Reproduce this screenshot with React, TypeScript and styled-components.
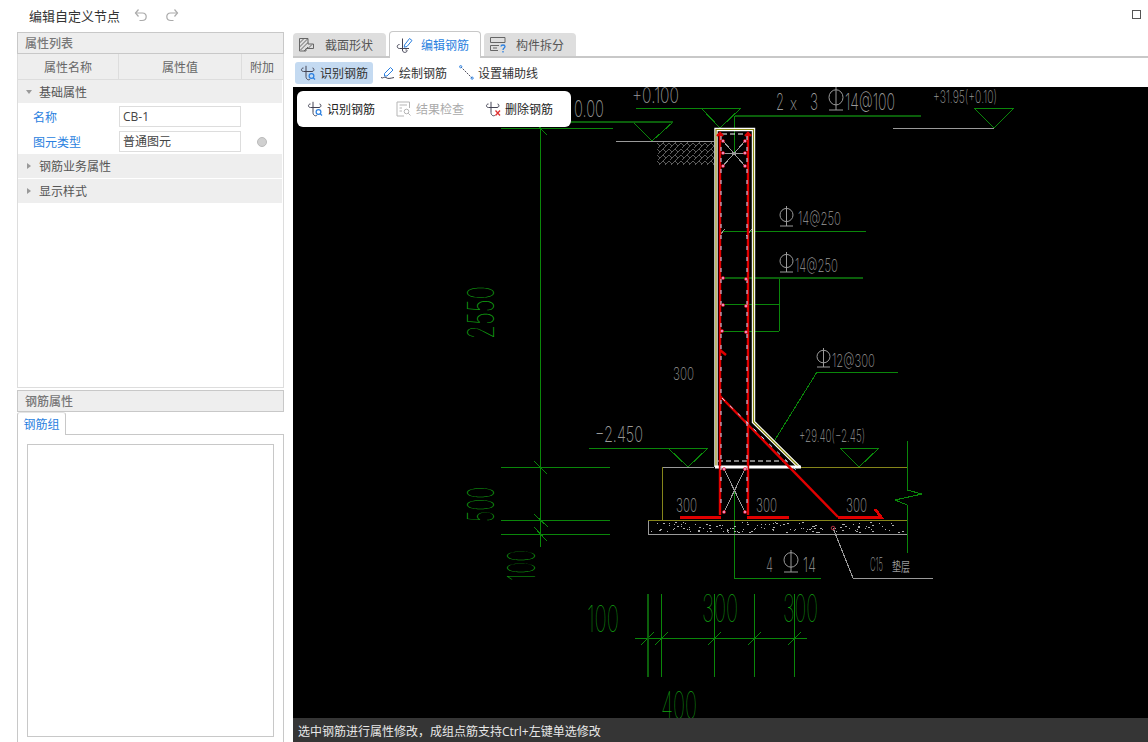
import React from 'react';
import styled, { createGlobalStyle } from 'styled-components';

const blue = '#2a7fe0';
const green = '#0a860a';
const darkGreen = '#0b5f0b';
const gray = '#9a9a9a';
const olive = '#85851a';
const red = '#e00000';

const GlobalStyle = createGlobalStyle`
  html, body { margin: 0; padding: 0; height: 100%; background: #fff; overflow: hidden; }
  body { font-family: "Open Sans", "Noto Sans CJK SC", sans-serif; font-size: 12px; color: #333; }
  #root { height: 100%; }
`;

const Page = styled.div`
  display: flex;
  flex-direction: column;
  height: 742px;
  width: 1148px;
`;

const TopBar = styled.header`
  display: flex;
  align-items: center;
  height: 31px;
  padding: 0 7px 0 29px;
  flex: none;
`;

const WindowTitle = styled.span`
  font-size: 13px;
  color: #333;
  margin-right: 14px;
`;

const HistoryButton = styled.span`
  display: flex;
  margin-right: 17px;
  margin-bottom: 2px;
`;

const MaxButton = styled.span`
  width: 7px;
  height: 7px;
  border: 1px solid #555;
  margin-left: auto;
  margin-bottom: 2px;
`;

const Body = styled.div`
  display: flex;
  flex: 1;
  min-height: 0;
`;

const Sidebar = styled.aside`
  display: flex;
  flex-direction: column;
  width: 267px;
  margin: 1px 9px 0 17px;
  flex: none;
`;

const PropertyPanel = styled.section`
  display: flex;
  flex-direction: column;
  height: 356px;
  border-left: 1px solid #ddd;
  border-right: 1px solid #ddd;
  border-bottom: 1px solid #ddd;
  box-sizing: border-box;
  flex: none;
`;

const PanelHeader = styled.h3<{ $flush?: boolean }>`
  margin: ${(p) => (p.$flush ? '0' : '0 -1px')};
  height: 22px;
  line-height: 21px;
  box-sizing: border-box;
  padding-left: 7px;
  background: #eeeeee;
  border: 1px solid #c8c8c8;
  font-size: 12px;
  font-weight: 500;
  color: #777;
  flex: none;
`;

const ColumnRow = styled.div`
  display: grid;
  grid-template-columns: 100px 123px 41px;
  height: 26px;
  background: #eeeeee;
  border-bottom: 1px solid #ddd;
  box-sizing: border-box;
`;

const ColumnCell = styled.div<{ $sep?: boolean }>`
  display: flex;
  align-items: center;
  justify-content: center;
  padding-top: 1px;
  color: #666;
  border-left: ${(p) => (p.$sep ? '1px solid #ddd' : 'none')};
`;

const GroupRow = styled.div<{ $open?: boolean }>`
  display: flex;
  align-items: center;
  height: ${(p) => (p.$open ? '23px' : '24px')};
  margin-bottom: 1px;
  padding-left: 8px;
  margin-right: 1px;
  background: #eeeeee;
  color: #555;
  box-sizing: border-box;
`;

const Caret = styled.span<{ $open?: boolean }>`
  width: 0;
  height: 0;
  border-style: solid;
  ${(p) =>
    p.$open
      ? 'border-width: 4px 3px 0 3px; border-color: #999 transparent transparent transparent; margin-right: 7px;'
      : 'border-width: 3px 0 3px 4px; border-color: transparent transparent transparent #999; margin-left: 1px; margin-right: 8px;'}
`;

const PropRow = styled.div`
  display: grid;
  grid-template-columns: 100px 123px 41px;
  align-items: center;
  height: 25px;
`;

const PropName = styled.span`
  color: ${blue};
  padding-left: 15px;
`;

const PropValue = styled.div`
  height: 21px;
  line-height: 19px;
  margin-left: 1px;
  padding-left: 3px;
  box-sizing: border-box;
  border: 1px solid #ddd;
  color: #444;
  background: #fff;
`;

const Radio = styled.span`
  justify-self: center;
  margin-left: 1px;
  width: 8px;
  height: 8px;
  border-radius: 50%;
  background: #d0d0d0;
  border: 1px solid #bbb;
`;

const RebarPanel = styled.section`
  display: flex;
  flex-direction: column;
  flex: 1;
  margin-top: 2px;
  min-height: 0;
`;

const RebarTabBar = styled.div`
  height: 23px;
  flex: none;
`;

const RebarTab = styled.span`
  display: block;
  width: 49px;
  height: 23px;
  line-height: 23px;
  box-sizing: border-box;
  text-align: center;
  color: ${blue};
  background: #fff;
  border: 1px solid #c8c8c8;
  border-top-color: #e4e4e4;
  border-bottom: none;
  border-radius: 3px 3px 0 0;
  position: relative;
  z-index: 1;
`;

const RebarBody = styled.div`
  flex: 1;
  margin-top: -1px;
  padding: 9px 9px 5px;
  border: 1px solid #c8c8c8;
  border-bottom: none;
  box-sizing: border-box;
  display: flex;
`;

const RebarList = styled.div`
  flex: 1;
  border: 1px solid #c8c8c8;
`;

const Workspace = styled.main`
  display: flex;
  flex-direction: column;
  flex: 1;
  min-width: 0;
`;

const TabBar = styled.nav`
  display: flex;
  align-items: flex-end;
  height: 27px;
  border-bottom: 2px solid #c8c8c8;
  flex: none;
  gap: 3px;
  box-sizing: border-box;
`;

const Tab = styled.div<{ $active?: boolean; $width: number; $gap: number }>`
  display: flex;
  align-items: center;
  gap: ${(p) => p.$gap}px;
  width: ${(p) => p.$width}px;
  height: ${(p) => (p.$active ? '27px' : '23px')};
  margin-bottom: ${(p) => (p.$active ? '-2px' : '0')};
  padding-left: 6px;
  box-sizing: border-box;
  border-radius: 4px 4px 0 0;
  background: ${(p) => (p.$active ? '#fff' : '#dedede')};
  border: ${(p) => (p.$active ? '1px solid #c8c8c8' : 'none')};
  border-bottom: none;
  color: ${(p) => (p.$active ? blue : '#555')};
  position: relative;
`;

const ToolBar = styled.div`
  display: flex;
  align-items: center;
  height: 29px;
  padding-left: 2px;
  gap: 2px;
  flex: none;
  box-sizing: border-box;
`;

const ToolButton = styled.div<{ $active?: boolean }>`
  display: flex;
  align-items: center;
  gap: 4px;
  height: 22px;
  padding: 0 5px;
  border-radius: 3px;
  background: ${(p) => (p.$active ? '#c4daf1' : 'transparent')};
  color: #333;
`;

const Canvas = styled.div`
  position: relative;
  flex: 1;
  min-height: 0;
  background: #000;
  overflow: hidden;
`;

const Drawing = styled.svg`
  display: block;
  width: 100%;
  height: 100%;
`;

const FloatBar = styled.div`
  position: absolute;
  left: 4px;
  top: 4px;
  width: 274px;
  height: 36px;
  display: flex;
  align-items: center;
  padding-left: 10px;
  gap: 21px;
  box-sizing: border-box;
  background: #fff;
  border-radius: 6px;
`;

const FloatButton = styled.div<{ $disabled?: boolean }>`
  display: flex;
  align-items: center;
  gap: 4px;
  color: ${(p) => (p.$disabled ? '#aaa' : '#222')};
`;

const StatusBar = styled.footer`
  height: 24px;
  line-height: 28px;
  padding-left: 5px;
  background: #353535;
  color: #e8e8e8;
  flex: none;
  overflow: hidden;
  white-space: nowrap;
`;

/* icons */
const HistoryIcon = ({ redo }: { redo?: boolean }) => (
  <svg width="14" height="14" viewBox="0 0 14 14" fill="none" stroke="#aaa" strokeWidth="1.2" style={redo ? { transform: 'scaleX(-1)' } : undefined}>
    <path d="M1.5 5H8.5C13.5 5 13.5 12.5 8 12.5H5.5" />
    <path d="M4.5 1.5L1.5 5L4.5 8.5" />
  </svg>
);

const RebarIcon = ({ badge }: { badge?: 'find' | 'delete' }) => (
  <svg width="16" height="16" viewBox="0 0 16 16" fill="none" strokeWidth="1" stroke="#445">
    <path d="M3.5 3C.8 3 .8 6.5 3.5 6.5H12C14.5 6.5 14.5 3 12.5 3" />
    <path d="M6 .8V11.5C6 15 9.5 15.5 10 14" />
    {badge === 'find' && (
      <g stroke={blue} strokeWidth="1.2">
        <circle cx="11.5" cy="11" r="2.4" />
        <path d="M13.3 12.8L15 14.5" />
      </g>
    )}
    {badge === 'delete' && (
      <g stroke="#e03030" strokeWidth="1.3">
        <path d="M10.5 9.5L15 14.5M15 9.5L10.5 14.5" />
      </g>
    )}
  </svg>
);

const SectionIcon = () => (
  <svg width="15" height="15" viewBox="0 0 15 15" fill="none" stroke="#666" strokeWidth="1">
    <path d="M.5 1.5H9V7H14.5V11.5H7V14H.5Z" />
    <path d="M.5 6L5 1.5M.5 10L8.5 2M1.5 13L9 5.5M5 14L9 10" />
    <path d="M9 11.5L13 7.5" />
  </svg>
);

const EditRebarIcon = () => (
  <svg width="17" height="17" viewBox="0 0 17 17" fill="none" stroke="#445" strokeWidth="1">
    <path d="M3.5 7.5C.5 7.5 .5 11.5 3.5 11.5H13" />
    <path d="M6.5 1.5V13C6.5 16 10.5 16 11 14C11.3 12.8 10 12.5 9.5 13" />
    <path d="M8.5 8L13.5 1.5L16 3.5L11 9.5L8.2 10.2Z" stroke={blue} />
  </svg>
);

const SplitIcon = () => (
  <svg width="17" height="17" viewBox="0 0 17 17" fill="none" stroke="#666" strokeWidth="1">
    <path d="M.5 6.5V1.5H15V6.5ZM.5 9.5H9M.5 9.5V14.5H8M3 12H7" />
    <path d="M11 10.5C11 8.5 15 8.5 15 10.5C15 12 13 12 13 14" stroke={blue} strokeWidth="1.3" />
    <path d="M13 15V16.5" stroke={blue} strokeWidth="1.3" />
  </svg>
);

const PencilIcon = () => (
  <svg width="15" height="15" viewBox="0 0 15 15" fill="none" strokeWidth="1">
    <path d="M1 12.5C3 14 4.5 11 6 12.5S10 13.5 14 12.5" stroke="#445" />
    <path d="M4.5 8.5L10.5 2.5L13 5L7 11H4.5Z" stroke={blue} />
  </svg>
);

const AuxLineIcon = () => (
  <svg width="15" height="15" viewBox="0 0 16 16" fill="none" strokeWidth="1">
    <path d="M2 2L14 14" stroke="#445" strokeDasharray="2 1" />
    <circle cx="1.8" cy="1.8" r="1.2" stroke={blue} />
    <circle cx="14" cy="14" r="1.2" stroke={blue} />
  </svg>
);

const CheckIcon = () => (
  <svg width="16" height="16" viewBox="0 0 16 16" fill="none" stroke="#b5b5b5" strokeWidth="1">
    <path d="M13.5 7V1H1V15H8" />
    <path d="M3.5 4H11M3.5 7H6M3.5 10H6" />
    <circle cx="10.5" cy="10.5" r="2.3" />
    <path d="M12.2 12.2L14.5 14.5" />
  </svg>
);

/* CAD drawing data, page coordinates */
type Seg = [number, number, number, number];

const thinGreen: Seg[] = [
  [636, 108, 741, 108], [701, 108, 720, 128], [741, 108, 720, 128],
  [633, 122, 652, 141], [673, 122, 652, 141],
  [501, 128, 613, 128], [540, 127, 540, 547],
  [534, 122, 547, 135],
  [501, 467, 610, 467], [501, 520, 610, 520], [501, 534, 610, 534],
  [534, 461, 547, 474], [534, 514, 548, 527], [534, 527, 547, 541],
  [974, 108, 1014, 108], [974, 108, 994, 128], [1014, 108, 994, 128],
  [734, 116, 734, 153],
  [722, 231, 866, 231], [779, 278, 779, 331], [722, 304, 779, 304], [722, 331, 779, 331],
  [898, 372, 817, 372], [817, 372, 773, 443],
  [589, 448, 708, 448], [668, 448, 688, 467], [708, 448, 688, 467],
  [840, 448, 879, 448], [840, 448, 859, 467], [879, 448, 859, 467],
  [907, 441, 907, 490], [907, 490, 922, 494], [922, 494, 895, 500], [895, 500, 907, 505], [907, 505, 907, 553],
  [734, 490, 734, 578], [734, 578, 821, 578],
  [635, 638, 807, 638], [661, 594, 661, 677], [714, 594, 714, 677], [754, 594, 754, 677], [794, 594, 794, 677],
  [641, 645, 654, 632], [655, 645, 668, 632], [708, 645, 721, 632], [748, 645, 761, 632], [788, 645, 801, 632],
];

const thickGreen: Seg[] = [
  [571, 122, 673, 122], [735, 116, 921, 116], [725, 278, 863, 278], [648, 594, 648, 677],
];

const grayLines: Seg[] = [
  [616, 141, 714, 141], [893, 128, 994, 128], [662, 467, 714, 467],
  [723, 141, 745, 166], [745, 141, 723, 166], [723, 153, 745, 153],
  [724, 469, 745, 512], [745, 469, 724, 512],
  [648, 534, 907, 534], [648, 520, 648, 534],
  [833, 528, 853, 578], [853, 578, 933, 578],
  [719, 236, 725, 229], [746, 236, 752, 229],
];

const oliveLines: Seg[] = [
  [800, 467, 907, 467], [662, 467, 662, 520], [648, 520, 907, 520],
];

const redBars = [
  'M720 515V134', 'M748 134V515',
  'M720 396L838 517', 'M720 350L726 355', 'M717 136L720 133L723 136', 'M745 136L748 133L751 136',
];

const redFeet = ['M680 517H721', 'M747 517H789', 'M838 517H881L875 509'];

const rebarDots: [number, number][] = [
  [723, 141], [745, 141], [723, 153], [745, 153], [723, 166], [745, 166],
  [723, 278], [746, 279], [723, 305], [746, 306], [722, 331], [746, 332],
  [724, 469], [745, 469], [724, 512], [745, 512],
];

// speckles of the lean concrete layer
let seed = 41;
const nextRandom = (max: number) => {
  seed = (seed * 1103515245 + 12345) & 0x7fffffff;
  return (seed >> 8) % max;
};
const speckles = Array.from({ length: 130 }, () => ({
  x: 651 + nextRandom(254),
  y: 522 + nextRandom(11),
  w: 1 + nextRandom(2),
}));

type Label = { t: string; x: number; y: number; w: number; size: number };

const grayLabels: Label[] = [
  { t: '0.00', x: 574, y: 117, w: 30, size: 23 },
  { t: '+0.100', x: 632, y: 103, w: 47, size: 21 },
  { t: '2', x: 776, y: 110, w: 8, size: 23 },
  { t: 'x', x: 790, y: 110, w: 7, size: 18 },
  { t: '3', x: 810, y: 110, w: 8, size: 23 },
  { t: '14@100', x: 845, y: 110, w: 50, size: 23 },
  { t: '+31.95(+0.10)', x: 933, y: 103, w: 64, size: 17 },
  { t: '14@250', x: 798, y: 225, w: 43, size: 18 },
  { t: '14@250', x: 795, y: 272, w: 43, size: 18 },
  { t: '12@300', x: 832, y: 367, w: 43, size: 18 },
  { t: '300', x: 673, y: 380, w: 21, size: 18 },
  { t: '−2.450', x: 595, y: 442, w: 48, size: 22 },
  { t: '+29.40(−2.45)', x: 799, y: 442, w: 66, size: 17 },
  { t: '300', x: 676, y: 512, w: 21, size: 19 },
  { t: '300', x: 756, y: 512, w: 21, size: 19 },
  { t: '300', x: 846, y: 512, w: 21, size: 19 },
  { t: '4', x: 766, y: 572, w: 7, size: 20 },
  { t: '14', x: 803, y: 572, w: 13, size: 20 },
  { t: 'C15', x: 870, y: 571, w: 13, size: 19 },
];

const greenLabels: Label[] = [
  { t: '100', x: 587, y: 632, w: 32, size: 37 },
  { t: '300', x: 702, y: 622, w: 36, size: 38 },
  { t: '300', x: 783, y: 622, w: 35, size: 38 },
  { t: '400', x: 661, y: 719, w: 36, size: 38 },
];

const rotatedLabels: Label[] = [
  { t: '2550', x: 494, y: 339, w: 53, size: 37 },
  { t: '500', x: 494, y: 522, w: 35, size: 37 },
  { t: '100', x: 535, y: 581, w: 31, size: 38 },
];

const rebarMarks: [number, number, number, number][] = [
  [829, 87, 14, 23], [780, 206, 13, 20], [780, 252, 13, 20], [817, 348, 13, 19], [784, 550, 14, 22],
];

const Lines = ({ segs, color, width }: { segs: Seg[]; color: string; width: number }) => (
  <g stroke={color} strokeWidth={width} shapeRendering="crispEdges">
    {segs.map(([x1, y1, x2, y2], i) => (
      <line key={i} x1={x1} y1={y1} x2={x2} y2={y2} />
    ))}
  </g>
);

// Grade symbol: a circle crossed by a stem, standing on a foot
const RebarMark = ({ x, y, w, h }: { x: number; y: number; w: number; h: number }) => (
  <g stroke={gray} strokeWidth="1" fill="none">
    <ellipse cx={x + w / 2} cy={y + h * 0.45} rx={w / 2} ry={h * 0.33} />
    <path d={`M${x + w / 2} ${y}V${y + h}M${x} ${y + h}H${x + w}`} />
  </g>
);

const CadDrawing = () => (
  <Drawing viewBox="293 87 855 631" preserveAspectRatio="xMinYMin slice">
    <defs>
      <pattern id="earth" x="657" y="142" width="12" height="6" patternUnits="userSpaceOnUse">
        <path d="M0 1L3 4L6 1L9 4L12 1M3 4L1 6M6 1L9 -2M9 4L7 6" fill="none" stroke="#5c5c5c" strokeWidth="1" />
      </pattern>
    </defs>
    <rect x="657" y="142" width="57" height="23" fill="url(#earth)" />
    <Lines segs={thinGreen} color={green} width={1} />
    <Lines segs={thickGreen} color={darkGreen} width={2} />
    <Lines segs={grayLines} color={gray} width={1} />
    <Lines segs={oliveLines} color={olive} width={1} />
    <g fill="#b0b0b0" shapeRendering="crispEdges">
      {speckles.map((s, i) => (
        <rect key={i} x={s.x} y={s.y} width={s.w} height="1" />
      ))}
    </g>
    <path d="M716 467V129.5H753.5V422L799 467" fill="none" stroke="#fff" strokeWidth="3.4" />
    <path d="M716 467V129.5H753.5V422L799 467" fill="none" stroke="#8a8a10" strokeWidth="1.2" />
    <path d="M715 467H801" stroke="#fff" strokeWidth="3" />
    <path d="M718 461H790M722 134H746" stroke="#fff" strokeWidth="1" strokeDasharray="5 3" />
    <g fill="none" stroke={red} strokeWidth="2.4">
      {redBars.map((d) => (
        <path key={d} d={d} />
      ))}
    </g>
    <g fill="none" stroke={red} strokeWidth="3" shapeRendering="crispEdges">
      {redFeet.map((d) => (
        <path key={d} d={d} />
      ))}
    </g>
    <path d="M721 136V510M747 136V510M722 398L798 472" fill="none" stroke="#cfe0ff" strokeWidth="1" strokeDasharray="4 7" />
    <g fill="#f090c8" stroke={red} strokeWidth="0.5">
      {rebarDots.map(([x, y]) => (
        <circle key={`${x}-${y}`} cx={x} cy={y} r="1.6" />
      ))}
    </g>
    <circle cx="833" cy="528" r="1.8" fill="none" stroke="#b03040" />
    <g fontFamily="Inter, sans-serif" fontWeight="200" fill={gray}>
      {grayLabels.map((l) => (
        <text key={`${l.t}-${l.x}`} x={l.x} y={l.y} fontSize={l.size} textLength={l.w} lengthAdjust="spacingAndGlyphs">
          {l.t}
        </text>
      ))}
      <text x="892" y="571" fontSize="13" fontWeight="400" fontFamily='"Noto Sans CJK SC", sans-serif' textLength="18" lengthAdjust="spacingAndGlyphs">
        垫层
      </text>
    </g>
    {rebarMarks.map(([x, y, w, h]) => (
      <RebarMark key={`${x}-${y}`} x={x} y={y} w={w} h={h} />
    ))}
    <g fontFamily="Inter, sans-serif" fontWeight="100" fill="#12a012">
      {greenLabels.map((l) => (
        <text key={`${l.t}-${l.x}`} x={l.x} y={l.y} fontSize={l.size} textLength={l.w} lengthAdjust="spacingAndGlyphs">
          {l.t}
        </text>
      ))}
      {rotatedLabels.map((l) => (
        <text
          key={l.t + l.y}
          x={l.x}
          y={l.y}
          fontSize={l.size}
          textLength={l.w}
          lengthAdjust="spacingAndGlyphs"
          transform={`rotate(-90 ${l.x} ${l.y})`}
        >
          {l.t}
        </text>
      ))}
    </g>
  </Drawing>
);

export default function App() {
  return (
    <Page>
      <GlobalStyle />
      <TopBar>
        <WindowTitle>编辑自定义节点</WindowTitle>
        <HistoryButton><HistoryIcon /></HistoryButton>
        <HistoryButton><HistoryIcon redo /></HistoryButton>
        <MaxButton />
      </TopBar>
      <Body>
        <Sidebar>
          <PropertyPanel>
            <PanelHeader>属性列表</PanelHeader>
            <ColumnRow>
              <ColumnCell>属性名称</ColumnCell>
              <ColumnCell $sep>属性值</ColumnCell>
              <ColumnCell $sep>附加</ColumnCell>
            </ColumnRow>
            <GroupRow $open><Caret $open />基础属性</GroupRow>
            <PropRow>
              <PropName>名称</PropName>
              <PropValue>CB-1</PropValue>
            </PropRow>
            <PropRow>
              <PropName>图元类型</PropName>
              <PropValue>普通图元</PropValue>
              <Radio />
            </PropRow>
            <GroupRow><Caret />钢筋业务属性</GroupRow>
            <GroupRow><Caret />显示样式</GroupRow>
          </PropertyPanel>
          <RebarPanel>
            <PanelHeader $flush>钢筋属性</PanelHeader>
            <RebarTabBar><RebarTab>钢筋组</RebarTab></RebarTabBar>
            <RebarBody><RebarList /></RebarBody>
          </RebarPanel>
        </Sidebar>
        <Workspace>
          <TabBar>
            <Tab $width={93} $gap={11}><SectionIcon />截面形状</Tab>
            <Tab $active $width={92} $gap={8}><EditRebarIcon />编辑钢筋</Tab>
            <Tab $width={92} $gap={9}><SplitIcon />构件拆分</Tab>
          </TabBar>
          <ToolBar>
            <ToolButton $active><RebarIcon badge="find" />识别钢筋</ToolButton>
            <ToolButton><PencilIcon />绘制钢筋</ToolButton>
            <ToolButton><AuxLineIcon />设置辅助线</ToolButton>
          </ToolBar>
          <Canvas>
            <CadDrawing />
            <FloatBar>
              <FloatButton><RebarIcon badge="find" />识别钢筋</FloatButton>
              <FloatButton $disabled><CheckIcon />结果检查</FloatButton>
              <FloatButton><RebarIcon badge="delete" />删除钢筋</FloatButton>
            </FloatBar>
          </Canvas>
          <StatusBar>选中钢筋进行属性修改，成组点筋支持Ctrl+左键单选修改</StatusBar>
        </Workspace>
      </Body>
    </Page>
  );
}
